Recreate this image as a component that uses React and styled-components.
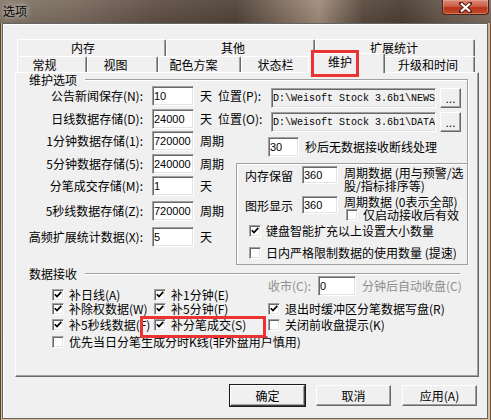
import React from "react";
import styled, { createGlobalStyle } from "styled-components";

const GlobalStyle = createGlobalStyle`
	html, body {
		margin: 0;
		padding: 0;
		background: #fff;
	}
	body {
		font-family: "Noto Sans CJK SC", "Liberation Sans", sans-serif;
		font-size: 12px;
		line-height: 14px;
		color: #000;
	}
	* {
		box-sizing: border-box;
	}
`;

const backTabs = [
	["内存", 149, 17],
	["其他", 149, 15],
	["扩展统计", 160, 2],
];

const frontTabs = [
	["常规", 70, 15],
	["视图", 71, 14],
	["配色方案", 83, 12],
	["状态栏", 69, 0],
	["维护", 73, 13, true],
	["升级和时间", 92, 2],
];

const storageRows = [
	{ label: "1分钟数据存储(1):", value: "720000", unit: "周期", mt: 0 },
	{ label: "5分钟数据存储(5):", value: "240000", unit: "周期", mt: 3 },
	{ label: "分笔成交存储(M):", value: "1", unit: "天", mt: 2 },
	{ label: "5秒线数据存储(Z):", value: "720000", unit: "周期", mt: 5 },
	{ label: "高频扩展统计数据(X):", value: "5", unit: "天", mt: 6 },
];

function CheckMark() {
	return (
		<svg width="8" height="7" viewBox="0 0 8 7">
			<path d="M0.8 3.2 L3 5.6 L7.3 0.9" stroke="#000" strokeWidth="1.7" fill="none" />
		</svg>
	);
}

function Check({ checked, children, ml }) {
	return (
		<CheckItem $ml={ml}>
			<CheckBox>{checked && <CheckMark />}</CheckBox>
			<span>{children}</span>
		</CheckItem>
	);
}

export default function App() {
	return (
		<>
			<GlobalStyle />
			<Window>
				<TitleBar>
					<Title>选项</Title>
					<CloseButton>
						<svg width="13" height="11" viewBox="0 0 13 11">
							<path d="M2 1.5 L11 9.5 M11 1.5 L2 9.5" stroke="#5a1f14" strokeWidth="4" strokeLinecap="square" />
							<path d="M2 1.5 L11 9.5 M11 1.5 L2 9.5" stroke="#fff" strokeWidth="2.2" />
						</svg>
					</CloseButton>
				</TitleBar>
				<Frame>
					<Client>
						<TabRow $h={17}>
							{backTabs.map(([label, w, pr]) => (
								<Tab key={label} $w={w} $pr={pr} $h={17}>
									{label}
								</Tab>
							))}
						</TabRow>
						<TabRow $h={16}>
							{frontTabs.map(([label, w, pr, active]) =>
								active ? (
									<ActiveTab key={label} $w={w} $pr={pr}>
										{label}
									</ActiveTab>
								) : (
									<Tab key={label} $w={w} $pr={pr} $h={16}>
										{label}
									</Tab>
								)
							)}
						</TabRow>
						<Panel>
							<Section $w={452}>
								<GroupHeader>
									<GroupTitle>维护选项</GroupTitle>
									<Rule />
								</GroupHeader>
								<GroupBody>
									<Row>
										<Label>公告新闻保存(N):</Label>
										<Input $w={42} $ml={9} defaultValue="10" readOnly />
										<Unit>天</Unit>
										<LocLabel>位置(P):</LocLabel>
										<PathField $dy={2}>
											<PathInput defaultValue="D:\Weisoft Stock 3.6b1\NEWS" readOnly />
											<DotsButton>...</DotsButton>
										</PathField>
									</Row>
									<Row $mt={3}>
										<Label>日线数据存储(D):</Label>
										<Input $w={42} $ml={9} defaultValue="24000" readOnly />
										<Unit>天</Unit>
										<LocLabel>位置(O):</LocLabel>
										<PathField $dy={3}>
											<PathInput defaultValue="D:\Weisoft Stock 3.6b1\DATA" readOnly />
											<DotsButton>...</DotsButton>
										</PathField>
									</Row>
									<Lower>
										<LeftCol>
											{storageRows.map((r) => (
												<Row key={r.label} $mt={r.mt}>
													<Label>{r.label}</Label>
													<Input $w={42} $ml={9} defaultValue={r.value} readOnly />
													<Unit>{r.unit}</Unit>
												</Row>
											))}
										</LeftCol>
										<RightCol>
											<TimeoutRow>
												<Input $w={31} defaultValue="30" readOnly />
												<Unit>秒后无数据接收断线处理</Unit>
											</TimeoutRow>
											<InnerBox>
												<BoxRow>
													<BoxLabel>内存保留</BoxLabel>
													<Input $w={36} $h={18} defaultValue="360" readOnly />
													<Note>
														周期数据 (用与预警/选
														<br />
														股/指标排序等)
													</Note>
												</BoxRow>
												<BoxRow $mt={4}>
													<BoxLabel>图形显示</BoxLabel>
													<Input $w={36} $h={18} defaultValue="360" readOnly />
													<NoteCol>
														<NoteLine>周期数据 (0表示全部)</NoteLine>
														<Check ml={2}>仅启动接收后有效</Check>
													</NoteCol>
												</BoxRow>
												<BoxChecks>
													<Check checked ml={4}>
														键盘智能扩充以上设置大小数量
													</Check>
													<Check ml={4}>日内严格限制数据的使用数量 (提速)</Check>
												</BoxChecks>
											</InnerBox>
										</RightCol>
									</Lower>
								</GroupBody>
							</Section>
							<Section $w={452} $mt={3}>
								<GroupHeader>
									<GroupTitle>数据接收</GroupTitle>
									<Rule $mr={8} />
								</GroupHeader>
								<ReceiveGrid>
									<Check checked>补日线(A)</Check>
									<Check checked>补1分钟(E)</Check>
									<CloseRow>
										<DimLabel>收市(C):</DimLabel>
										<Input $w={38} defaultValue="0" readOnly />
										<DimText>分钟后自动收盘(C)</DimText>
									</CloseRow>
									<Check checked>补除权数据(W)</Check>
									<Check checked>补5分钟(F)</Check>
									<Check checked>退出时缓冲区分笔数据写盘(R)</Check>
									<Check checked>补5秒线数据(F)</Check>
									<Check checked>补分笔成交(S)</Check>
									<Check>关闭前收盘提示(K)</Check>
									<WideCell>
										<Check>优先当日分笔生成分时K线(非外盘用户慎用)</Check>
									</WideCell>
								</ReceiveGrid>
							</Section>
						</Panel>
						<ButtonBar>
							<Button $default>确定</Button>
							<Button>取消</Button>
							<Button>应用(A)</Button>
						</ButtonBar>
					</Client>
				</Frame>
				<Highlight $x={311} $y={50} $w={48} $h={27} />
				<Highlight $x={140} $y={316} $w={126} $h={22} />
			</Window>
		</>
	);
}

const Window = styled.div`
	position: relative;
	width: 491px;
	height: 420px;
	display: flex;
	flex-direction: column;
	overflow: hidden;
	background: #c9a985;
`;

const TitleBar = styled.div`
	height: 23px;
	display: flex;
	justify-content: space-between;
	align-items: flex-start;
	padding-right: 2px;
	background:
		linear-gradient(180deg, rgba(255, 255, 255, 0.06), rgba(0, 0, 0, 0.08)),
		linear-gradient(
			90deg,
			#85776b 0%,
			#7a6b5f 15%,
			#5f5045 32%,
			#52443a 48%,
			#8a7868 60%,
			#a08d7b 65%,
			#5a4b40 74%,
			#4c3f35 82%,
			#6d5e52 92%,
			#7f6f62 100%
		);
`;

const Title = styled.div`
	padding: 4px 0 0 3px;
	line-height: 13px;
	color: #000;
	text-shadow: 0 0 5px rgba(255, 255, 255, 0.75), 0 0 9px rgba(255, 255, 255, 0.45);
`;

const CloseButton = styled.div`
	width: 47px;
	height: 15px;
	display: flex;
	align-items: center;
	justify-content: center;
	border: 1px solid #4d2118;
	border-top: none;
	border-radius: 0 0 4px 4px;
	background: linear-gradient(180deg, #d98a78 0%, #cc5f48 45%, #b7341c 55%, #c4492c 100%);
	box-shadow: inset 0 0 0 1px rgba(255, 200, 180, 0.35);
`;

const Frame = styled.div`
	flex: 1;
	display: flex;
	padding: 0 2px 1px 1px;
	border-left: 1px solid #5c4231;
	border-right: 1px solid #6e5342;
	background: linear-gradient(180deg, #cfb08e, #d9bd9c);
`;

const Client = styled.div`
	flex: 1;
	display: flex;
	flex-direction: column;
	padding: 15px 8px 0 12px;
	border: 1px solid #646464;
	background: #f0f0f0;
	box-shadow: inset 1px 1px 0 #fff;
`;

const TabRow = styled.div`
	display: flex;
	height: ${(p) => p.$h}px;
	margin-left: 2px;
	width: 458px;
`;

const Tab = styled.div`
	width: ${(p) => p.$w}px;
	height: ${(p) => p.$h}px;
	padding-right: ${(p) => p.$pr}px;
	line-height: ${(p) => p.$h - 1}px;
	text-align: center;
	white-space: nowrap;
	background: #f0f0f0;
	border-top: 1px solid #fff;
	border-left: 1px solid #fff;
	border-right: 1px solid #696969;
	border-radius: 2px 2px 0 0;
	box-shadow: inset -1px 0 0 #a0a0a0;
`;

const ActiveTab = styled(Tab).attrs({ $h: 20 })`
	position: relative;
	z-index: 1;
	width: ${(p) => p.$w + 4}px;
	margin: -3px -2px -1px;
	padding-top: 1px;
	line-height: 14px;
`;

const Panel = styled.div`
	height: 305px;
	display: flex;
	flex-direction: column;
	border-top: 1px solid #fff;
	border-left: 1px solid #fff;
	border-right: 1px solid #696969;
	border-bottom: 1px solid #696969;
	box-shadow: inset -1px -1px 0 #a0a0a0;
`;

const Section = styled.div`
	width: ${(p) => p.$w}px;
	margin-top: ${(p) => p.$mt ?? 1}px;
	display: flex;
	flex-direction: column;
`;

const GroupHeader = styled.div`
	height: 12px;
	display: flex;
	align-items: center;
`;

const GroupTitle = styled.div`
	margin-left: 13px;
	line-height: 12px;
	white-space: nowrap;
`;

const Rule = styled.div`
	flex: 1;
	height: 2px;
	margin: 0 ${(p) => p.$mr ?? 0}px 0 8px;
	border-top: 1px solid #a0a0a0;
	border-bottom: 1px solid #fff;
`;

const GroupBody = styled.div`
	margin-top: -6px;
	padding-top: 6px;
	border-right: 1px solid #a0a0a0;
	box-shadow: 1px 0 0 #fff;
`;

const Row = styled.div`
	height: 20px;
	margin-top: ${(p) => p.$mt ?? 0}px;
	display: flex;
	align-items: center;
	white-space: nowrap;
`;

const Label = styled.div`
	width: 127px;
	text-align: right;
	white-space: nowrap;
`;

const Input = styled.input`
	flex: none;
	width: ${(p) => p.$w}px;
	height: ${(p) => p.$h ?? 20}px;
	margin: 0 0 0 ${(p) => p.$ml ?? 0}px;
	padding: 0 0 0 1px;
	border: 1px solid;
	border-color: #a0a0a0 #fff #fff #a0a0a0;
	box-shadow: inset 1px 1px 0 #696969, inset -1px -1px 0 #e3e3e3;
	background: #fff;
	font: 11px "Liberation Sans", Arial, sans-serif;
	color: #000;
	outline: none;
`;

const Unit = styled.div`
	margin-left: 6px;
	white-space: nowrap;
`;

const LocLabel = styled.div`
	width: 53px;
	margin-left: 6px;
	white-space: nowrap;
`;

const PathField = styled.div`
	display: flex;
	align-self: flex-start;
	margin-top: ${(p) => p.$dy}px;
	gap: 4px;
`;

const PathInput = styled(Input).attrs({ $w: 165 })`
	background: #f0f0f0;
	font: 10px "Liberation Mono", "Courier New", monospace;
	letter-spacing: 0;
`;

const RaisedBase = styled.div`
	display: flex;
	justify-content: center;
	background: #f0f0f0;
	border: 1px solid;
	border-color: #fff #696969 #696969 #fff;
	box-shadow: inset -1px -1px 0 #a0a0a0;
	white-space: nowrap;
`;

const DotsButton = styled(RaisedBase)`
	width: 21px;
	height: 20px;
	align-items: flex-end;
	padding-bottom: 3px;
	font: 12px "Liberation Sans", Arial, sans-serif;
	line-height: 10px;
`;

const Lower = styled.div`
	display: flex;
	margin-top: 2px;
`;

const LeftCol = styled.div`
	width: 220px;
	display: flex;
	flex-direction: column;
`;

const RightCol = styled.div`
	flex: 1;
	display: flex;
	flex-direction: column;
`;

const TimeoutRow = styled.div`
	height: 20px;
	margin-top: 6px;
	padding-left: 32px;
	display: flex;
	align-items: center;
`;

const InnerBox = styled.div`
	height: 102px;
	margin: 6px -1px 0 0;
	padding: 2px 0 0 8px;
	border: 1px solid #a0a0a0;
	box-shadow: inset 1px 1px 0 #fff;
	display: flex;
	flex-direction: column;
`;

const BoxRow = styled.div`
	display: flex;
	align-items: flex-start;
	margin-top: ${(p) => p.$mt ?? 0}px;
`;

const BoxLabel = styled.div`
	width: 57px;
	padding-top: 3px;
	white-space: nowrap;
`;

const Note = styled.div`
	margin-left: 6px;
	line-height: 13px;
	white-space: nowrap;
`;

const NoteCol = styled.div`
	margin-left: 6px;
	display: flex;
	flex-direction: column;
`;

const NoteLine = styled.div`
	line-height: 12px;
	white-space: nowrap;
`;

const BoxChecks = styled.div`
	display: flex;
	flex-direction: column;
	gap: 9px;
	margin-top: 3px;
`;

const CheckItem = styled.div`
	display: flex;
	align-items: center;
	gap: 5px;
	height: 13px;
	margin-left: ${(p) => p.$ml ?? 0}px;
	line-height: 13px;
	white-space: nowrap;
`;

const CheckBox = styled.span`
	flex: none;
	width: 12px;
	height: 12px;
	display: flex;
	align-items: center;
	justify-content: center;
	background: #fff;
	border: 1px solid;
	border-color: #a0a0a0 #fff #fff #a0a0a0;
	box-shadow: inset 1px 1px 0 #696969, inset -1px -1px 0 #e3e3e3;
`;

const ReceiveGrid = styled.div`
	display: grid;
	grid-template-columns: 102px 114px 1fr;
	grid-template-rows: 14px 16px 17px 14px;
	padding: 8px 0 0 36px;
	align-items: start;
`;

const CloseRow = styled.div`
	height: 20px;
	margin-top: -12px;
	display: flex;
	align-items: center;
`;

const DimLabel = styled.div`
	width: 50px;
	color: #8f8f8f;
	white-space: nowrap;
`;

const DimText = styled.div`
	margin-left: 6px;
	color: #8f8f8f;
	white-space: nowrap;
`;

const WideCell = styled.div`
	grid-column: 1 / 4;
`;

const ButtonBar = styled.div`
	display: flex;
	justify-content: flex-end;
	gap: 11px;
	margin: 8px 2px 0 0;
`;

const Button = styled(RaisedBase)`
	width: 75px;
	height: 21px;
	align-items: center;
	line-height: 14px;
	border-color: ${(p) => (p.$default ? "#fff #404040 #404040 #fff" : "#fff #696969 #696969 #fff")};
	outline: ${(p) => (p.$default ? "1px solid #1a1a1a" : "none")};
	outline-offset: 0;
	box-shadow: inset -1px -1px 0 #a0a0a0;
`;

const Highlight = styled.div`
	position: absolute;
	z-index: 2;
	left: ${(p) => p.$x}px;
	top: ${(p) => p.$y}px;
	width: ${(p) => p.$w}px;
	height: ${(p) => p.$h}px;
	border: 3px solid #ea3434;
	pointer-events: none;
`;
